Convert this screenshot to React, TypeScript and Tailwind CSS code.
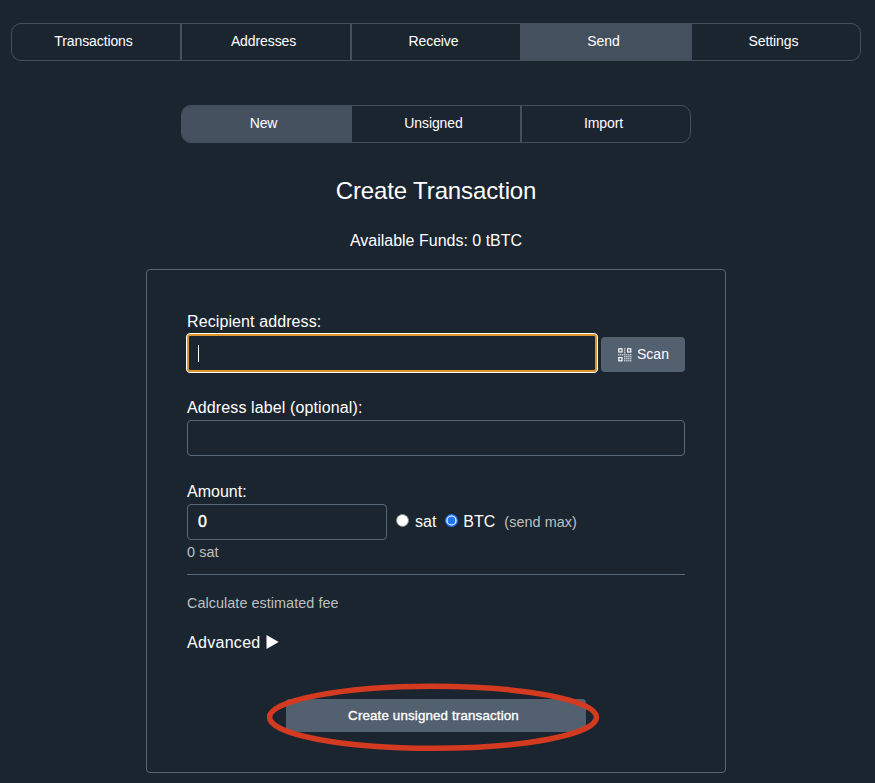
import React from "react";

type TabProps = { items: string[]; active: string };

function Tabs({ items, active }: TabProps) {
  return (
    <nav className="flex">
      {items.map((item) => (
        <a
          key={item}
          className={
            "flex h-[38px] w-[170px] items-center justify-center border border-[#44505e] pr-[5px] pb-[2px] text-[14px] tracking-[-0.1px] first:rounded-l-[10px] last:rounded-r-[10px] " +
            (item === active ? "bg-[#44505e]" : "")
          }
        >
          {item}
        </a>
      ))}
    </nav>
  );
}

function QrIcon() {
  const dots = [
    [6, 0], [6, 2], [6, 4], [0, 6], [2, 6], [4, 6], [6, 6], [8, 6], [10, 6], [12, 6],
    [6, 8], [8, 8], [10, 8], [12, 8], [6, 10], [8, 10], [10, 10], [12, 10],
    [6, 12], [8, 12], [10, 12], [12, 12],
  ];
  return (
    <svg width="14" height="14" viewBox="0 0 14 14" className="mr-[5px]">
      <g fill="none" stroke="#fff" strokeWidth="1.2">
        <rect x="0.8" y="0.8" width="3.2" height="3.2" />
        <rect x="9.6" y="0.8" width="3.2" height="3.2" />
        <rect x="0.8" y="9.6" width="3.2" height="3.2" />
      </g>
      <g fill="#fff" fillOpacity="0.8">
        {dots.map(([x, y]) => (
          <rect key={x + "-" + y} x={x + 0.1} y={y + 0.1} width="1.3" height="1.3" />
        ))}
      </g>
    </svg>
  );
}

function Radio({ checked }: { checked?: boolean }) {
  return (
    <svg width="13" height="13" viewBox="0 0 13 13" className="mb-[3px]">
      <circle cx="6.5" cy="6.5" r={checked ? 5.8 : 6} fill="#fff" stroke={checked ? "#2374f5" : "#858585"} strokeWidth={checked ? 1.4 : 1} />
      {checked && <circle cx="6.5" cy="6.5" r="3.9" fill="#2374f5" />}
    </svg>
  );
}

export default function App() {
  return (
    <div className="flex h-[783px] w-[875px] flex-col overflow-hidden bg-[#1b2530] pt-[23px] font-['Liberation_Sans',Arial,sans-serif] text-[16px] text-white">
      <div className="flex w-[872px] flex-col items-center">
        <Tabs items={["Transactions", "Addresses", "Receive", "Send", "Settings"]} active="Send" />
        <div className="mt-[44px]">
          <Tabs items={["New", "Unsigned", "Import"]} active="New" />
        </div>
        <h1 className="mt-[32px] text-[24px] leading-[32px] tracking-[-0.12px]">Create Transaction</h1>
        <p className="mt-[25px] leading-[18px]">Available Funds: 0 tBTC</p>

        <main className="relative mt-[19px] flex h-[504px] w-[580px] flex-col rounded-[4px] border border-[#596877] px-[40px] pt-[43px]">
          <label className="leading-[18px] tracking-[0.1px]">Recipient address:</label>
          <div className="mt-[2px] -ml-px flex h-[40px] items-center">
            <div className="flex h-[40px] w-[412px] items-center rounded-[4px] border border-white bg-white">
              <div className="flex h-[38px] w-[410px] items-center rounded-[3px] border-2 border-[#dc9530] bg-[#1b2530] pl-[9px]">
                <span className="h-[17px] w-px bg-white" />
              </div>
            </div>
            <button className="mt-[3px] ml-[3px] flex h-[35px] w-[84px] items-center justify-center rounded-[4px] bg-[#53606f] pl-[1px] text-[14px]">
              <QrIcon />
              Scan
            </button>
          </div>

          <label className="mt-[26px] leading-[18px] tracking-[0.12px]">Address label (optional):</label>
          <div className="mt-[3px] h-[36px] rounded-[4px] border border-[#596877]" />

          <label className="mt-[27px] leading-[18px]">Amount:</label>
          <div className="mt-[3px] flex h-[36px] items-center">
            <div className="flex h-[36px] w-[200px] items-center rounded-[4px] border border-[#596877] pl-[10px] [-webkit-text-stroke:0.4px_white]">0</div>
            <span className="ml-[9px] flex items-center gap-[6px]">
              <Radio />
              sat
            </span>
            <span className="ml-[9px] flex items-center gap-[5px]">
              <Radio checked />
              BTC
            </span>
            <span className="mt-[2px] ml-[9px] text-[14.4px] tracking-[0.05px] text-[#bfc0c1]">(send max)</span>
          </div>
          <p className="mt-[3px] text-[14.4px] leading-[18px] tracking-[0.1px] text-[#bfc0c1]">0 sat</p>
          <hr className="mt-[13px] border-[#596877]" />
          <p className="mt-[19px] text-[14.4px] leading-[18px] tracking-[0.05px] text-[#bfc0c1]">Calculate estimated fee</p>
          <div className="mt-[22px] flex items-center leading-[18px] tracking-[0.3px]">
            Advanced
            <svg width="13" height="14" viewBox="0 0 13 14" className="mb-[2px] ml-[5px]">
              <path d="M0.5 0 L12.7 7 L0.5 14 Z" fill="#fff" />
            </svg>
          </div>
          <button className="mt-[47px] ml-[99px] h-[33px] w-[300px] rounded-[4px] bg-[#53606f] pr-[5px] text-[13.33px] tracking-[0.15px] [-webkit-text-stroke:0.35px_white]">
            Create unsigned transaction
          </button>
          <svg className="absolute top-[412px] left-[118px]" width="336" height="72" viewBox="0 0 336 72">
            <ellipse cx="168" cy="35.3" rx="163.5" ry="31" fill="none" stroke="#d43a20" strokeWidth="5.5" />
          </svg>
        </main>
      </div>
    </div>
  );
}
